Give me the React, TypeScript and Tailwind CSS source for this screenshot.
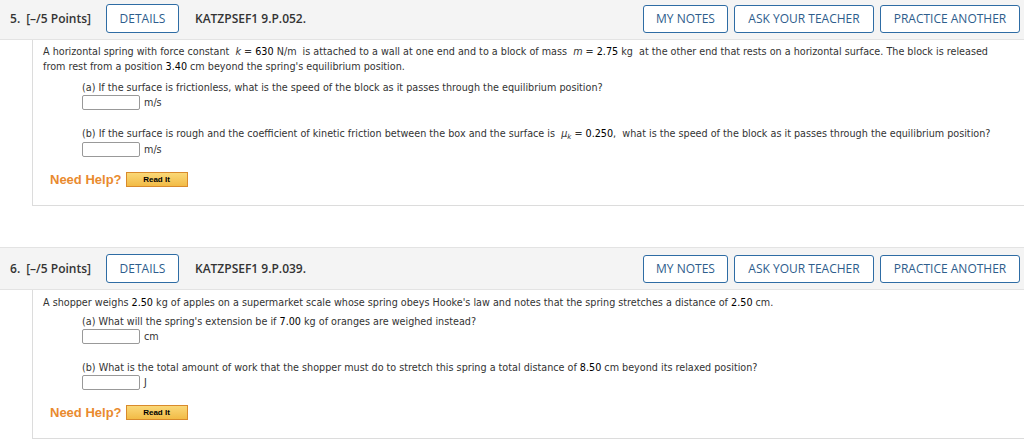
import React from "react";

const headFont = { fontFamily: '"Open Sans", "Liberation Sans", sans-serif' };
const bodyFont = { fontFamily: '"DejaVu Sans", Verdana, sans-serif' };

function Header({ num, code }: { num: string; code: string }) {
  return (
    <div
      className="flex items-center h-[42px] bg-[#f4f4f4] border-b border-[#e3e3e3] pl-[10px] pr-[4px]"
      style={headFont}
    >
      <span className="text-[12px] font-semibold text-[#333]">{num}.</span>
      <span className="ml-[6px] text-[12px] font-semibold text-[#333]">[–/5 Points]</span>
      <button className="ml-[15px] h-[29px] w-[73px] border-[1.5px] border-[#2e6ca4] rounded-[3px] text-[12px] text-[#2e5d8c] bg-white">
        DETAILS
      </button>
      <span className="ml-[16px] text-[12px] font-semibold text-[#333]">{code}</span>
      <div className="ml-auto flex gap-[6px]">
        <button className="h-[28px] w-[85px] border-[1.5px] border-[#2e6ca4] rounded-[3px] text-[12px] text-[#2e5d8c] bg-white">
          MY NOTES
        </button>
        <button className="h-[28px] w-[140px] border-[1.5px] border-[#2e6ca4] rounded-[3px] text-[12px] text-[#2e5d8c] bg-white">
          ASK YOUR TEACHER
        </button>
        <button className="h-[28px] w-[140px] border-[1.5px] border-[#2e6ca4] rounded-[3px] text-[12px] text-[#2e5d8c] bg-white">
          PRACTICE ANOTHER
        </button>
      </div>
    </div>
  );
}

function Answer({ unit, className = "" }: { unit: string; className?: string }) {
  return (
    <div className={"flex items-center " + className}>
      <div className="w-[58px] h-[15px] border border-[#999] rounded-[2px] bg-white" />
      <span className="ml-[4px] text-[#333]">{unit}</span>
    </div>
  );
}

function Help({ className = "" }: { className?: string }) {
  return (
    <div className={"flex items-center pl-[17px] " + className}>
      <span
        className="text-[13px] leading-[15px] font-bold text-[#e98a2e]"
        style={{ fontFamily: '"Liberation Sans", Arial, sans-serif' }}
      >
        Need Help?
      </span>
      <button
        className="ml-[4px] w-[62px] h-[15px] bg-gradient-to-b from-[#fad877] to-[#f2bb45] border border-[#d98a2c] text-[8px] font-bold text-black leading-none"
        style={{ fontFamily: '"Liberation Sans", Arial, sans-serif' }}
      >
        Read It
      </button>
    </div>
  );
}

const V = ({ children }: { children: React.ReactNode }) => (
  <span className="text-black">{children}</span>
);
const I = ({ children }: { children: React.ReactNode }) => (
  <span className="italic text-[#333]">{children}</span>
);

export default function App() {
  return (
    <div className="w-[1024px] h-[440px] bg-white overflow-hidden">
      <div className="-mt-[2px]">
        <Header num="5" code="KATZPSEF1 9.P.052." />
      </div>
      <div
        className="ml-[32px] border-l border-b border-[#dcdcdc] h-[166px] pt-[4px] text-[9.65px] leading-[15px] text-[#333]"
        style={bodyFont}
      >
        <p className="pl-[10px] pr-[20px]">
          A horizontal spring with force constant&nbsp; <I>k</I> = <V>630</V> N/m&nbsp; is attached to a wall at one
          end and to a block of mass&nbsp; <I>m</I> = <V>2.75</V> kg&nbsp; at the other end that rests on a horizontal
          surface. The block is released from rest from a position <V>3.40</V> cm beyond the spring's equilibrium
          position.
        </p>
        <div className="pl-[49px] mt-[6px]">
          <p>(a) If the surface is frictionless, what is the speed of the block as it passes through the equilibrium position?</p>
          <Answer unit="m/s" />
          <p className="mt-[16px]">
            (b) If the surface is rough and the coefficient of kinetic friction between the box and the surface is&nbsp;{" "}
            <I>
              μ<sub className="text-[7px]">k</sub>
            </I>{" "}
            = <V>0.250</V>,&nbsp; what is the speed of the block as it passes through the equilibrium position?
          </p>
          <Answer unit="m/s" className="mt-[1px]" />
        </div>
        <Help className="mt-[15px]" />
      </div>
      <div className="h-[41px]" />
      <div className="border-t border-[#e3e3e3]">
        <Header num="6" code="KATZPSEF1 9.P.039." />
      </div>
      <div
        className="ml-[32px] border-l border-b border-[#dcdcdc] h-[149px] pt-[5px] text-[9.65px] leading-[15px] text-[#333]"
        style={bodyFont}
      >
        <p className="pl-[10px]">
          A shopper weighs <V>2.50</V> kg of apples on a supermarket scale whose spring obeys Hooke's law and notes that
          the spring stretches a distance of <V>2.50</V> cm.
        </p>
        <div className="pl-[49px] mt-[4px]">
          <p>
            (a) What will the spring's extension be if <V>7.00</V> kg of oranges are weighed instead?
          </p>
          <Answer unit="cm" />
          <p className="mt-[16px]">
            (b) What is the total amount of work that the shopper must do to stretch this spring a total distance of{" "}
            <V>8.50</V> cm beyond its relaxed position?
          </p>
          <Answer unit="J" />
        </div>
        <Help className="mt-[15px]" />
      </div>
    </div>
  );
}
